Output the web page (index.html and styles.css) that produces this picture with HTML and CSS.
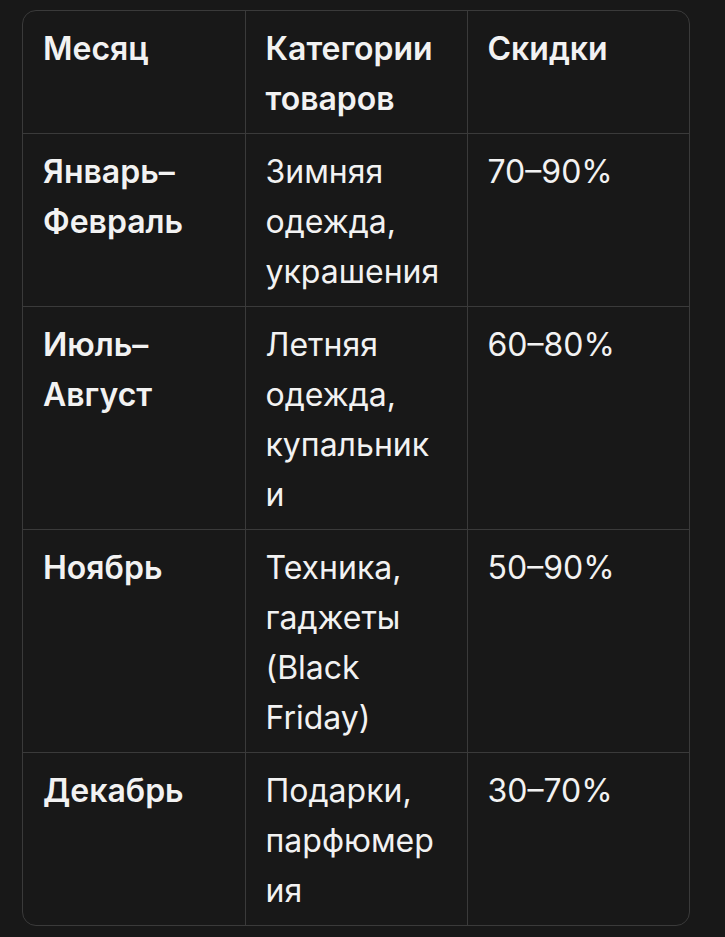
FILE: index.html
```html
<!DOCTYPE html>
<html lang="ru">
<head>
<meta charset="utf-8">
<link rel="stylesheet" href="styles.css">
</head>
<body>
<div class="page">
  <div class="table-wrap">
    <table class="sales">
      <thead>
        <tr><th>Месяц</th><th>Категории товаров</th><th>Скидки</th></tr>
      </thead>
      <tbody>
        <tr><td class="month">Январь–Февраль</td><td>Зимняя одежда, украшения</td><td>70–90%</td></tr>
        <tr><td class="month">Июль–Август</td><td>Летняя одежда, купальники</td><td>60–80%</td></tr>
        <tr><td class="month">Ноябрь</td><td>Техника, гаджеты (Black Friday)</td><td>50–90%</td></tr>
        <tr><td class="month">Декабрь</td><td>Подарки, парфюмерия</td><td>30–70%</td></tr>
      </tbody>
    </table>
  </div>
</div>
</body>
</html>
```
FILE: styles.css
```css
html, body {
  margin: 0;
  padding: 0;
  background: #181818;
}
body {
  font-family: Inter, "Noto Sans", sans-serif;
  color: #f2f2f2;
}
.page {
  padding: 10px 35px 0 22px;
}
.table-wrap {
  width: 668px;
  border: 1px solid #3a3a3a;
  border-radius: 14px;
  overflow: hidden;
  box-sizing: border-box;
}
.sales {
  width: 100%;
  border-collapse: collapse;
  table-layout: fixed;
}
.sales th, .sales td {
  text-align: left;
  vertical-align: top;
  padding: 13px 21px 9px 20px;
  font-size: 32px;
  line-height: 50px;
  overflow-wrap: anywhere;
  border-right: 1px solid #3a3a3a;
  border-bottom: 1px solid #3a3a3a;
}
.sales th:last-child, .sales td:last-child {
  border-right: none;
}
.sales tbody tr:last-child td {
  border-bottom: none;
}
.sales th, .sales td.month {
  font-weight: 600;
}
.sales td {
  font-weight: 400;
}
```
